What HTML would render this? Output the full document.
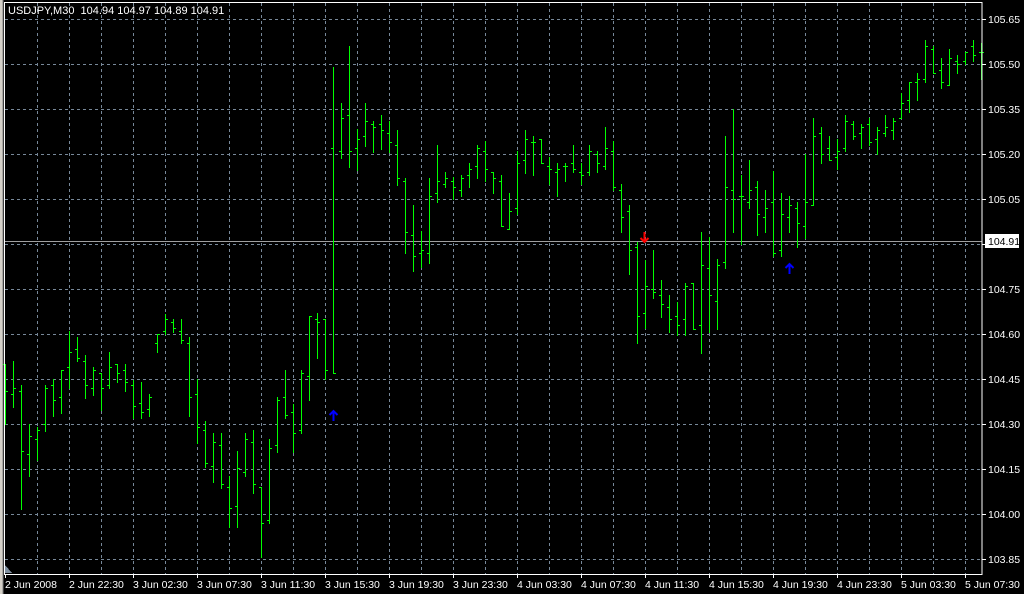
<!DOCTYPE html>
<html><head><meta charset="utf-8"><style>
html,body{margin:0;padding:0;background:#000;width:1024px;height:594px;overflow:hidden}
svg{display:block}
text{font-family:"Liberation Sans","DejaVu Sans",sans-serif;font-size:10.5px;fill:#fff}
</style></head><body>
<svg id="s" width="1024" height="594" xmlns="http://www.w3.org/2000/svg" shape-rendering="crispEdges">
<rect x="0" y="0" width="1024" height="594" fill="#000"/>
<rect x="0" y="0" width="3" height="594" fill="#d4d0c8"/>
<line x1="3" y1="0" x2="3" y2="594" stroke="#808080"/>
<g id="grid" stroke="#778899" stroke-dasharray="3,3" stroke-width="1"></g>
<line x1="4" y1="241.5" x2="982" y2="241.5" stroke="#a0a0a0"/>
<path id="bars" fill="none" stroke="#00ff00" stroke-width="1"></path>
<rect x="4.5" y="2.5" width="977.5" height="572" fill="none" stroke="#fff"/>
<g id="axis"></g>
<text x="8" y="14" style="font-size:11px">USDJPY,M30&#160;&#160;104.94 104.97 104.89 104.91</text>
<rect x="985" y="234" width="34" height="14" fill="#fff"/>
<text x="988" y="245" style="fill:#000">104.91</text>
<polygon points="5,565 5,573 12,573" fill="#8090a0"/>
<path d="M333.5 411 V421 M329.5 415 L333.5 411 L337.5 415" stroke="#0000ff" stroke-width="2" fill="none" shape-rendering="auto"/>
<path d="M789.5 264 V274 M785.5 268 L789.5 264 L793.5 268" stroke="#0000ff" stroke-width="2" fill="none" shape-rendering="auto"/>
<path d="M644.5 232 V242 M640.5 238 L644.5 242 L648.5 238" stroke="#ff0000" stroke-width="2" fill="none" shape-rendering="auto"/>
</svg>
<script>
var NS="http://www.w3.org/2000/svg";
var g=document.getElementById('grid'),ax=document.getElementById('axis');
function el(p,t,a,txt){var e=document.createElementNS(NS,t);for(var k in a)e.setAttribute(k,a[k]);if(txt)e.textContent=txt;p.appendChild(e);return e;}
for(var x=37;x<982;x+=32){el(g,'line',{x1:x+.5,y1:3,x2:x+.5,y2:574});}
var prices=["105.65","105.50","105.35","105.20","105.05","104.90","104.75","104.60","104.45","104.30","104.15","104.00","103.85"];
for(var i=0;i<13;i++){var y=19+45*i;el(g,'line',{x1:5,y1:y+.5,x2:982,y2:y+.5});
 el(ax,'line',{x1:982,y1:y+.5,x2:986,y2:y+.5,stroke:'#fff'});
 if(i!=5)el(ax,'text',{x:988,y:y+4},prices[i]);}
var labs=["2 Jun 2008","2 Jun 22:30","3 Jun 02:30","3 Jun 07:30","3 Jun 11:30","3 Jun 15:30","3 Jun 19:30","3 Jun 23:30","4 Jun 03:30","4 Jun 07:30","4 Jun 11:30","4 Jun 15:30","4 Jun 19:30","4 Jun 23:30","5 Jun 03:30","5 Jun 07:30"];
for(var i=0;i<16;i++){var x=5+64*i;el(ax,'line',{x1:x+.5,y1:574,x2:x+.5,y2:578,stroke:'#fff'});el(ax,'text',{x:x,y:588},labs[i]);}
var D=[[364,424,364,391],[361,407,394,388],[385,509,391,451],[424,476,454,436],[427,460,439,430],[385,431,424,388],[379,416,385,400],[370,413,397,370],[331,388,367,352],[337,361,349,358],[355,398,361,385],[367,395,388,370],[373,410,373,388],[352,388,385,367],[364,382,364,373],[364,391,370,382],[380,418,385,406],[382,418,403,412],[394,416,409,397],[334,352,343,334],[314,334,331,319],
[319,332,322,328],[319,343,331,340],[337,416,343,397],[379,443,394,427],[421,467,430,463],[433,482,466,442],[433,488,445,484],[476,527,487,508],[451,527,506,468],[433,476,472,439],[430,493,442,484],[487,557,487,523],[439,523,520,448],[397,452,445,400],[370,418,397,415],[404,452,412,433],[370,433,430,373],[316,400,376,316],[313,358,319,322],[319,379,319,370],
[67,373,148,373],[103,158,151,118],[46,167,115,151],[129,170,148,139],[103,146,136,121],[121,152,124,127],[115,149,124,130],[121,152,133,142],[130,185,145,178],[178,253,181,232],[205,271,235,256],[231,267,253,250],[178,263,253,196],[145,202,193,181],[172,187,184,178],[177,199,181,187],[175,196,190,178],[163,187,175,169],[145,178,166,148],[141,181,151,169],[172,193,172,178],
[175,226,181,226],[193,229,229,211],[151,214,208,163],[130,173,160,139],[136,175,142,142],[139,163,139,163],[157,184,166,169],[163,196,172,169],[163,181,166,166],[145,172,163,169],[163,184,172,175],[145,175,172,151],[151,172,154,163],[127,169,166,148],[141,190,151,187],[184,232,190,217],[205,274,211,250],[242,343,247,316],[260,328,313,286],[250,298,289,292],
[280,317,295,304],[295,332,307,319],[302,335,316,325],[283,335,319,286],[283,329,283,329],[232,353,325,265],[237,332,268,295],[259,329,301,265],[136,268,262,187],[109,232,190,199],[175,244,196,196],[160,208,202,190],[181,235,187,214],[190,232,217,208],[171,256,202,253],[193,256,250,214],[196,232,217,205],[202,247,208,223],[154,238,226,202],[118,205,205,136],[127,163,133,154],
[136,160,148,160],[139,169,157,151],[115,151,148,121],[121,139,124,136],[124,148,133,127],[118,145,124,142],[127,154,139,130],[115,136,133,127],[118,139,130,121],[93,118,118,103],[82,112,100,82],[73,100,82,79],[40,82,79,46],[46,73,49,73],[58,88,70,82],[49,85,85,58],[55,73,61,64],[52,64,61,52],[40,61,46,55],[43,79,52,52]];
var d="";
for(var i=0;i<D.length;i++){var x=5+8*i,b=D[i];d+="M"+(x+.5)+" "+b[0]+"V"+(b[1]+1)+"M"+(x-2)+" "+(b[2]+.5)+"H"+(x)+"M"+(x+1)+" "+(b[3]+.5)+"H"+(x+3);}
document.getElementById('bars').setAttribute('d',d);
</script>
</body></html>
